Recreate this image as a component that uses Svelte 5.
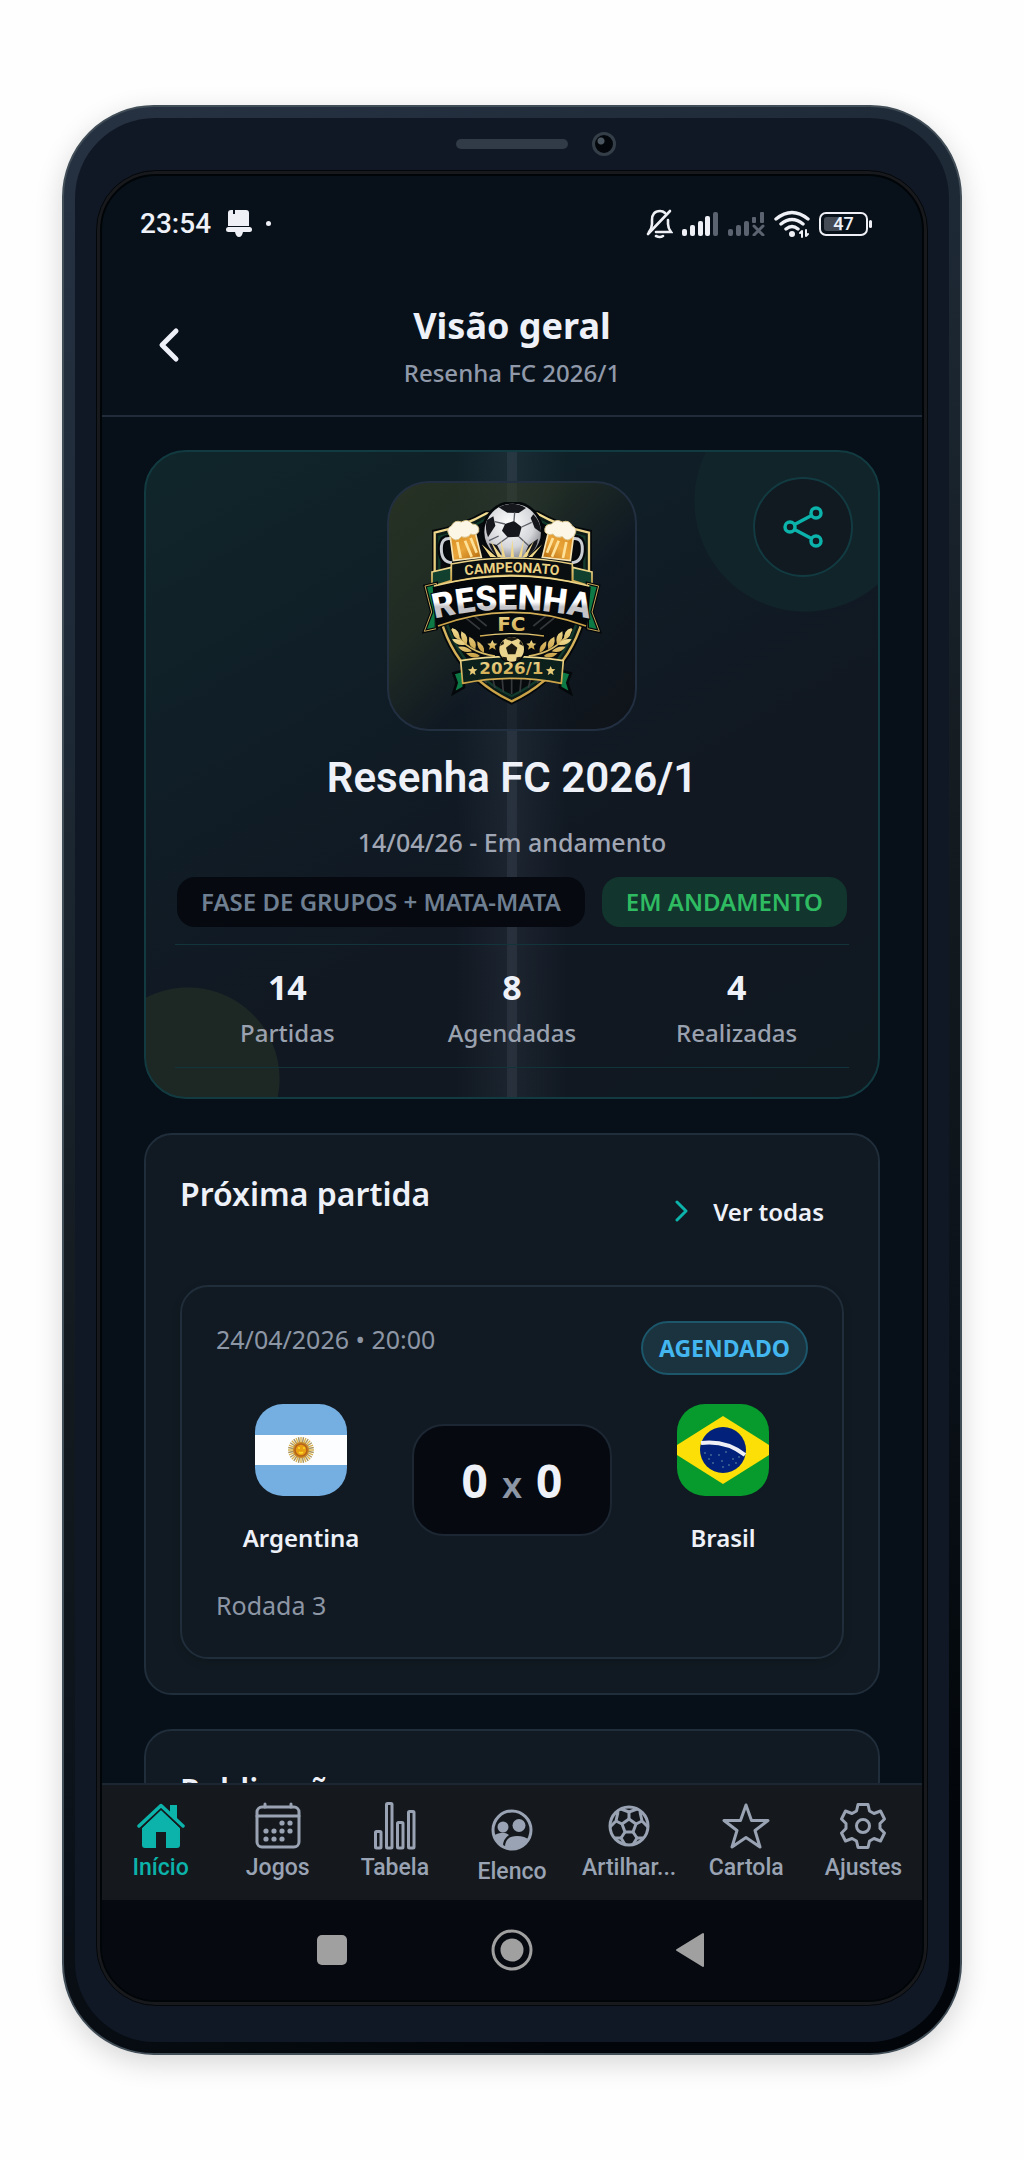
<script>
  let stats = [
    { value: 14, label: "Partidas" },
    { value: 8, label: "Agendadas" },
    { value: 4, label: "Realizadas" },
  ];

  let tabs = [
    { id: "home", label: "Início" },
    { id: "games", label: "Jogos" },
    { id: "table", label: "Tabela" },
    { id: "squad", label: "Elenco" },
    { id: "scorers", label: "Artilhar..." },
    { id: "star", label: "Cartola" },
    { id: "settings", label: "Ajustes" },
  ];

  let active = "home";

  const rays = Array.from({ length: 32 }, (_, i) => i * 11.25);
  const calendar_dots = [
    [29, 21], [37, 21],
    [13, 29], [21, 29], [29, 29], [37, 29],
    [13, 37], [21, 37], [29, 37],
  ];
  const sky = [
    [6, 52], [10, 58], [14, 62], [20, 54], [23, 60], [30, 64],
    [34, 58], [37, 62], [12, 54], [27, 51], [40, 56], [24, 66],
  ];
</script>

<div class="page">
  <div class="phone">
    <div class="body">
      <div class="sensors">
        <span class="speaker"></span>
        <span class="camera"></span>
      </div>

      <div class="bezel">
        <div class="screen">
          <div class="status">
            <span class="clock">23:54</span>
            <svg width="46" height="28" viewBox="0 0 46 28" fill="#eef0f5">
              <path d="M5 0h2v4h2V0h11q3 0 3 3v13H2V3q0-3 3-3z" />
              <rect y="17" width="26" height="5" rx="2.5" />
              <path d="M9 22h8q-1 5-4 5t-4-5z" />
              <circle cx="42.500" cy="13.500" r="2.500" />
            </svg>
            <span class="spacer"></span>
            <svg width="27" height="30" viewBox="0 0 27 30" fill="none" stroke="#eef0f5" stroke-width="2.600" stroke-linecap="round">
              <path d="M3 23q3-4 3-8v-4q0-9 8-9 3 0 5 2M22 11v4q0 4 3 8H10" />
              <path d="M24 2L2 25" />
              <path d="M10 27q4 2 7 0" />
            </svg>
            <svg width="37" height="24" viewBox="0 0 37 24" fill="#eef0f5">
              <rect y="17" width="5" height="7" rx="2" />
              <rect x="8" y="13" width="5" height="11" rx="2" />
              <rect x="16" y="9" width="5" height="15" rx="2" />
              <rect x="23" y="4" width="5" height="20" rx="2" />
              <rect x="31" width="5" height="24" rx="2" fill="#5c6370" />
            </svg>
            <svg width="37" height="24" viewBox="0 0 37 24" fill="#5c6370">
              <rect y="17" width="5" height="7" rx="2" />
              <rect x="8" y="13" width="5" height="11" rx="2" />
              <rect x="16" y="9" width="5" height="15" rx="2" />
              <rect x="24" y="5" width="4" height="6" rx="1" />
              <rect x="32" width="4" height="11" rx="1" />
              <path d="M26 14l9 9M35 14l-9 9" stroke="#5c6370" stroke-width="3" stroke-linecap="round" />
            </svg>
            <svg width="36" height="28" viewBox="0 0 36 28" fill="none" stroke="#eef0f5" stroke-width="3.400" stroke-linecap="round">
              <path d="M2 9q16-13 32 0M7 14q11-9 22 0M12 19q6-5 12 0" />
              <circle cx="18" cy="24" r="2" fill="#eef0f5" stroke-width="2" />
              <path d="M28 21v6M28 21l-2 2M32 20v6M32 26l2-2" stroke-width="2" />
            </svg>
            <span class="battery"><span>47</span></span>
          </div>

          <header>
            <button class="back" aria-label="Voltar">
              <svg width="22" height="36" viewBox="0 0 22 36" fill="none" stroke="#eef0f8" stroke-width="5" stroke-linecap="round" stroke-linejoin="round">
                <path d="M18 4L4 18l14 14" />
              </svg>
            </button>
            <div>
              <h1>Visão geral</h1>
              <p>Resenha FC 2026/1</p>
            </div>
          </header>

          <main>
            <section class="hero">
              <button class="share" aria-label="Compartilhar">
                <svg width="40" height="42" viewBox="0 0 40 42" fill="none" stroke="#0cb3aa" stroke-width="3.500">
                  <circle cx="33" cy="7" r="5" />
                  <circle cx="7" cy="21" r="5" />
                  <circle cx="33" cy="35" r="5" />
                  <path d="M28.500 9.500L11.500 18.500M28.500 32.500L11.500 23.500" />
                </svg>
              </button>

              <div class="crest">
                <svg width="182" height="208" viewBox="153 98 546 624">
                  <defs>
                    <linearGradient id="gold" x2="0" y2="1">
                      <stop offset="0" stop-color="#f1dc92" />
                      <stop offset="1" stop-color="#c9a044" />
                    </linearGradient>
                    <linearGradient id="steel" x2="0" y2="1">
                      <stop offset=".5" stop-color="#fff" />
                      <stop offset=".6" stop-color="#c4c4c8" />
                    </linearGradient>
                    <linearGradient id="beer" x2="1" y2="1">
                      <stop offset="0" stop-color="#d88a1c" />
                      <stop offset=".5" stop-color="#e9a53a" />
                      <stop offset="1" stop-color="#b06408" />
                    </linearGradient>
                    <radialGradient id="ball" cx=".45" cy=".35" r=".7">
                      <stop offset="0" stop-color="#fff" />
                      <stop offset=".6" stop-color="#d5d6da" />
                      <stop offset="1" stop-color="#77787e" />
                    </radialGradient>
                    <path id="arc-top" d="M278 319Q425 299 574 319" />
                    <path id="arc-mid" d="M196 448Q425 393 656 448" />
                  </defs>

                  <!-- shield -->
                  <path d="M186 182Q270 168 345 124H505Q580 168 666 182V330Q655 600 425 706Q195 600 186 330Z" fill="#05080a" />
                  <path d="M194 190Q280 172 350 132H500Q570 172 657 190V330Q645 592 425 696Q205 592 194 330Z" fill="#0b1a16" stroke="url(#gold)" stroke-width="7" />
                  <path d="M208 202Q285 186 350 148H500Q565 186 643 202V330Q630 582 425 680Q220 582 208 330Z" fill="#070b0d" stroke="#123a2c" stroke-width="7" />
                  <path d="M350 640l-20-16M375 656l-8-34M400 668l-4-46M425 674v-50M450 668l4-46M475 656l8-34M500 640l20-16M280 440l50 40M300 430l50 40M560 440l-50 40M540 430l-50 40" stroke="#36393c" stroke-width="5" />

                  <!-- ball -->
                  <circle cx="428" cy="188" r="93" fill="#05080a" />
                  <circle cx="428" cy="188" r="85" fill="url(#ball)" />
                  <g fill="#15171c">
                    <path d="M405 164l27-9 23 18-8 29-34 2-17-20z" />
                    <path d="M386 114q40-22 82 2l-22 15-34-1z" />
                    <path d="M350 153l20-12 6 28-22 35q-10-25-4-51z" />
                    <path d="M490 135q22 22 24 55l-20-14-12-30z" />
                    <path d="M357 222l24 5 14 28-12 8q-19-17-26-41z" />
                    <path d="M476 228l28-20q-3 30-27 50l-10-10z" />
                  </g>
                  <path d="M405 164l-31-7M432 155l2-26M455 173l30-14M447 202l29 27M413 204l-32 23M386 200l-29 14" stroke="#5d6068" stroke-width="4" />
                  <path d="M335 225l44 38h-18zM362 215l35 48h-14zM392 210l14 53h-9zM427 210l5 53h-10zM462 210l-7 53h-9zM492 215l-22 48h-12zM517 225l-30 38h-12z" fill="#f2d98a" />

                  <!-- mugs -->
                  {#each ["", "translate(851 0) scale(-1 1)"] as flip}
                    <g transform={flip}>
                      <path d="M242 208q-28-4-28 30 0 40 32 42" fill="none" stroke="#05080a" stroke-width="22" />
                      <path d="M242 208q-28-4-28 30 0 40 32 42" fill="none" stroke="#c9cdd4" stroke-width="9" />
                      <path d="M240 196l76-6 18 74-84 10z" fill="url(#beer)" stroke="#f5e3b3" stroke-width="5" />
                      <path d="M262 218l10 48M285 214l20 48M302 206l18 44" stroke="#ffe29a" stroke-width="8" />
                      <path d="M238 198q-12-20 6-28 10-20 30-12 20-12 32 6 24 0 20 24-10 12-24 6-8 14-28 8-16 22-36-4z" fill="#fbf6e6" stroke="#d9c48c" stroke-width="3" />
                    </g>
                  {/each}

                  <!-- ribbons -->
                  <path d="M186 308l58-14v40l-58 18zM666 308l-58-14v40l58 18z" fill="#12402f" stroke="url(#gold)" stroke-width="5" />
                  <path d="M165 350l34-8v136l-36 8 22-58zM686 350l-34-8v136l36 8-22-58z" fill="#0d7a45" stroke="#05080a" stroke-width="10" />
                  <path d="M165 350l34-8v136l-36 8 22-58zM686 350l-34-8v136l36 8-22-58z" fill="none" stroke="#c5a85a" stroke-width="3" />
                  <path d="M244 284Q425 248 607 284V338Q425 298 244 338Z" fill="#0a0f12" stroke="url(#gold)" stroke-width="5" />
                  <path d="M188 352Q425 292 662 352L652 480Q425 380 198 480Z" fill="#05080a" />
                  <path d="M192 350Q425 290 658 350M204 470Q425 388 648 470" fill="none" stroke="url(#gold)" stroke-width="5" />
                  <text class="crest-small"><textPath href="#arc-top" startOffset="50%" text-anchor="middle">CAMPEONATO</textPath></text>
                  <text class="crest-main"><textPath href="#arc-mid" startOffset="50%" text-anchor="middle">RESENHA</textPath></text>
                  <text class="crest-wide" x="424" y="485" font-size="60" text-anchor="middle">FC</text>
                  <path d="M330 500Q425 486 522 500" fill="none" stroke="url(#gold)" stroke-width="4" />

                  <!-- laurels -->
                  {#each ["", "translate(851 0) scale(-1 1)"] as flip}
                    <g transform={flip} fill="url(#gold)">
                      <path d="M245 480q50 72 130 80" fill="none" stroke="#d9bb66" stroke-width="5" />
                      <path d="M246 476q26 6 22 36-22-8-22-36zM274 486q24 12 16 40-22-14-16-40zM298 502q26 12 18 38-24-10-18-38zM322 516q24 12 20 34-22-8-20-34z" />
                      <path d="M246 510q26-4 40 16-26 6-40-16zM264 532q26-4 42 14-26 8-42-14zM288 552q26-6 42 8-22 12-42-8z" />
                      <path d="M367 512l5 10 10 1-8 7 3 11-10-6-10 6 3-11-8-7 10-1z" />
                    </g>
                  {/each}

                  <path d="M250 612l28-8 4 50-32 18 10-32zM602 612l-28-8-4 50 32 18-10-32z" fill="#0d7a45" stroke="#05080a" stroke-width="8" />
                  <path d="M272 574Q425 550 580 574L574 642Q425 612 278 642Z" fill="#0d211c" stroke="url(#gold)" stroke-width="5" />
                  <circle cx="425" cy="540" r="42" fill="#05080a" />
                  <circle cx="425" cy="540" r="37" fill="#ead48e" />
                  <path d="M425 522l17 13-6 20h-22l-6-20zM405 508l20 8 20-8q-20-10-40 0zM390 530l12-6-2-10q-10 8-10 16zM460 530l-12-6 2-10q10 8 10 16zM396 562l14 2 2 12q-12-4-16-14zM454 562l-14 2-2 12q12-4 16-14z" fill="#1d1a12" />
                  <text class="crest-wide" x="424" y="614" font-size="50" text-anchor="middle">2026/1</text>
                  <path d="M308 590l4 9 10 1-8 7 3 10-9-5-9 5 3-10-8-7 10-1zM542 590l4 9 10 1-8 7 3 10-9-5-9 5 3-10-8-7 10-1z" fill="#e7cb78" />
                </svg>
              </div>

              <h2 class="title">Resenha FC 2026/1</h2>
              <p class="when">14/04/26 - Em andamento</p>

              <div class="pills">
                <span class="pill">FASE DE GRUPOS + MATA-MATA</span>
                <span class="pill live">EM ANDAMENTO</span>
              </div>

              <div class="stats">
                {#each stats as stat}
                  <div>
                    <strong>{stat.value}</strong>
                    <span>{stat.label}</span>
                  </div>
                {/each}
              </div>
            </section>

            <section class="card">
              <div class="card-head">
                <h2>Próxima partida</h2>
                <button class="more">
                  <svg width="14" height="22" viewBox="0 0 14 22" fill="none" stroke="#0cb3aa" stroke-width="3" stroke-linecap="round" stroke-linejoin="round">
                    <path d="M2 2l9 9-9 9" />
                  </svg>
                  Ver todas
                </button>
              </div>

              <article class="match">
                <div class="match-head">
                  <p>24/04/2026 • 20:00</p>
                  <span class="badge">AGENDADO</span>
                </div>

                <div class="teams">
                  <div class="team">
                    <svg class="flag" viewBox="0 0 92 92">
                      <rect width="92" height="92" fill="#75aee0" />
                      <rect y="31" width="92" height="30" fill="#fcfdff" />
                      {#each rays as angle}
                        <path d="M46 33v9" stroke={angle % 22.5 ? "#a8935c" : "#d9b24c"} stroke-width="1.400" transform="rotate({angle} 46 46)" />
                      {/each}
                      <circle cx="46" cy="46" r="8" fill="#c98a2a" />
                      <circle cx="46" cy="46" r="6" fill="#e8a012" stroke="#b5621b" stroke-width="1.500" />
                      <path d="M43 44h2M48 44h2M44 48q2 2 4 0" stroke="#fddc2a" stroke-width="1.500" fill="none" />
                    </svg>
                    <span>Argentina</span>
                  </div>

                  <div class="score">
                    <b>0</b>
                    <span>x</span>
                    <b>0</b>
                  </div>

                  <div class="team">
                    <svg class="flag" viewBox="0 0 92 92">
                      <rect width="92" height="92" fill="#069b2c" />
                      <path d="M-8 46L46 12l54 34-54 34z" fill="#fddf08" />
                      <circle cx="46" cy="46" r="23" fill="#02217a" />
                      <path d="M24 39q25-3 44 12" fill="none" stroke="#eef0f5" stroke-width="4" />
                      {#each sky as [x, y]}
                        <circle cx={x + 22} cy={y - 3} r=".7" fill="#7fb3b5" />
                      {/each}
                    </svg>
                    <span>Brasil</span>
                  </div>
                </div>

                <p>Rodada 3</p>
              </article>
            </section>

            <section class="card">
              <div class="card-head">
                <h2>Publicações</h2>
              </div>
            </section>
          </main>

          <nav>
            {#each tabs as tab}
              <button class:active={tab.id === active} on:click={() => (active = tab.id)}>
                {#if tab.id === "home"}
                  <svg width="48" height="48" viewBox="0 0 48 48" fill="currentColor">
                    <path d="M24 8L5 26v17q0 3 3 3h11V30h10v16h11q3 0 3-3V26z" />
                    <path d="M2 24L24 3l22 21" fill="none" stroke="#15191d" stroke-width="7" />
                    <path d="M33 11V3h7v14z" />
                    <path d="M2 24L24 3.500 46 24" fill="none" stroke="currentColor" stroke-width="3.500" stroke-linecap="round" stroke-linejoin="round" />
                  </svg>
                {:else if tab.id === "games"}
                  <svg width="48" height="48" viewBox="0 0 48 48" fill="none" stroke="currentColor" stroke-width="3" stroke-linecap="round">
                    <rect x="3" y="5" width="42" height="40" rx="5" />
                    <path d="M3 14h42M11 2v3M37 2v3" />
                    {#each calendar_dots as [x, y]}
                      <circle cx={x - 1} cy={y} r="2.600" fill="currentColor" stroke="none" />
                    {/each}
                  </svg>
                {:else if tab.id === "table"}
                  <svg width="48" height="48" viewBox="0 0 48 48" fill="none" stroke="currentColor" stroke-width="3">
                    <rect x="4.500" y="29.500" width="5.500" height="16.500" rx="1" />
                    <rect x="15.500" y="1.500" width="5.500" height="44.500" rx="1" />
                    <rect x="26.500" y="20.500" width="5.500" height="25.500" rx="1" />
                    <rect x="37.500" y="9.500" width="5.500" height="36.500" rx="1" />
                  </svg>
                {:else if tab.id === "squad"}
                  <svg width="48" height="52" viewBox="0 0 48 52" fill="currentColor">
                    <circle cx="24" cy="28" r="19" fill="none" stroke="currentColor" stroke-width="3" />
                    <circle cx="15" cy="25" r="5.500" />
                    <circle cx="31" cy="23.500" r="6.500" />
                    <path d="M5 34q10-6 16-1-6 4-6 11-8-3-10-10z" />
                    <path d="M17 45q0-11 12-11 8 0 12 4-6 12-24 7z" />
                  </svg>
                {:else if tab.id === "scorers"}
                  <svg width="48" height="48" viewBox="0 0 48 48" fill="none" stroke="currentColor" stroke-width="3" stroke-linejoin="round">
                    <circle cx="24" cy="24" r="19" />
                    <path d="M24 17l7 5-3 8h-8l-3-8z" />
                    <path d="M24 17v-7M31 22l6-3M28 30l4 6M20 30l-4 6M17 22l-6-3" />
                    <path d="M16 7l8 3 8-3M37 19l-2-9M37 19l6 6M32 36h7M32 36l-4 6.500M16 36l4 6.500M16 36H9M11 19l-6 6M11 19l2-9" />
                  </svg>
                {:else if tab.id === "star"}
                  <svg width="48" height="48" viewBox="0 0 48 48" fill="none" stroke="currentColor" stroke-width="3" stroke-linejoin="round">
                    <path d="M24 3l5.500 15.500H46L33 28.500 38 45 24 35.500 10 45l5-16.500L2 18.500h16.500z" />
                  </svg>
                {:else}
                  <svg width="48" height="48" viewBox="0 0 48 48" fill="none" stroke="currentColor" stroke-width="3" stroke-linejoin="round">
                    <circle cx="24" cy="24" r="6.500" />
                    <path d="M19 2.500h10l1.500 6.500 4.500 2.500 6.500-2.500 4 8-4.500 4.500v5l4.500 4.500-4 8-6.500-2.500-4.500 2.500-1.500 6.500H19l-1.500-6.500-4.500-2.500-6.500 2.500-4-8L7 26.500v-5L2.500 17l4-8 6.500 2.500L17.500 9z" />
                  </svg>
                {/if}
                <span>{tab.label}</span>
              </button>
            {/each}
          </nav>

          <div class="system">
            <button aria-label="Recentes">
              <svg width="42" height="42" viewBox="0 0 42 42" fill="#a0a0a0"><rect x="6" y="6" width="30" height="30" rx="5" /></svg>
            </button>
            <button aria-label="Tela inicial">
              <svg width="42" height="42" viewBox="0 0 42 42" fill="#a0a0a0">
                <circle cx="21" cy="21" r="19" fill="none" stroke="#a0a0a0" stroke-width="3" />
                <circle cx="21" cy="21" r="11.500" />
              </svg>
            </button>
            <button aria-label="Voltar ao app anterior">
              <svg width="42" height="42" viewBox="0 0 42 42" fill="#a0a0a0" stroke="#a0a0a0" stroke-width="2" stroke-linejoin="round"><path d="M32 5v32L6 21z" /></svg>
            </button>
          </div>
        </div>
      </div>
    </div>
  </div>
</div>

<style>
  :global(body) {
    margin: 0;
    background: #fefefe;
  }

  .page {
    box-sizing: border-box;
    display: flex;
    height: 100vh;
    padding: 105px 62px;
    font-family: "Noto Sans", sans-serif;
    color: #eef1f8;
  }

  h1, h2, p {
    margin: 0;
  }

  svg {
    display: block;
    flex: none;
  }

  button {
    padding: 0;
    border: 0;
    background: none;
    color: inherit;
    font: inherit;
    cursor: pointer;
  }

  .phone {
    box-sizing: border-box;
    display: flex;
    flex: 1;
    min-width: 0;
    padding: 11px;
    border: 2px solid #414d57;
    border-radius: 92px;
    background: linear-gradient(150deg, #263242 0%, #1d2935 25%, #141b20 50%, #0b1219 70%, #02060a 90%);
    box-shadow: 0 8px 28px rgba(0, 0, 0, 0.16);
  }

  .body {
    display: flex;
    flex: 1;
    flex-direction: column;
    min-width: 0;
    padding: 0 21px 36px;
    border-radius: 80px;
    background: #111825;
  }

  .sensors {
    display: grid;
    grid-template-columns: 1fr auto 1fr;
    align-items: center;
    column-gap: 24px;
    height: 52px;
  }

  .speaker {
    grid-column: 2;
    width: 112px;
    height: 10px;
    border-radius: 5px;
    background: #303b47;
  }

  .camera {
    box-sizing: border-box;
    width: 24px;
    height: 24px;
    border: 3px solid #343e48;
    border-radius: 50%;
    background: radial-gradient(circle at 6px 6px, #4a5560 3px, #03070b 4px);
  }

  .bezel {
    display: flex;
    flex: 1;
    min-height: 0;
    padding: 3px;
    border: 1px solid #04070a;
    border-radius: 60px;
    background: #17191c;
  }

  .screen {
    display: flex;
    flex: 1;
    flex-direction: column;
    min-width: 0;
    overflow: hidden;
    border: 2px solid #020508;
    border-radius: 56px;
    background: #08111a;
  }

  .status {
    display: flex;
    align-items: center;
    gap: 9px;
    height: 95px;
    padding: 0 54px 0 38px;
    font-family: Roboto, sans-serif;
  }

  .clock {
    margin-right: 6px;
    font-size: 28px;
    font-weight: 500;
  }

  .spacer {
    flex: 1;
  }

  .battery {
    position: relative;
    box-sizing: border-box;
    width: 49px;
    height: 24px;
    padding: 3px;
    border: 2px solid #eef0f5;
    border-radius: 7px;
    font-size: 18px;
    font-weight: 500;
    line-height: 14px;
    text-align: center;
  }

  .battery span {
    display: block;
    border-radius: 3px;
    background: linear-gradient(90deg, #454b54 47%, transparent 47%);
  }

  .battery::after {
    position: absolute;
    top: 6px;
    right: -6px;
    width: 3px;
    height: 8px;
    border-radius: 2px;
    background: #eef0f5;
    content: "";
  }

  header {
    display: grid;
    grid-template-columns: 100px 1fr 100px;
    align-items: center;
    padding: 30px 0 26px;
    border-bottom: 2px solid #202c39;
    text-align: center;
  }

  .back {
    display: flex;
    justify-content: center;
    padding-left: 34px;
  }

  h1 {
    font-size: 36px;
    font-weight: 700;
    line-height: 50px;
  }

  header p {
    margin-top: 6px;
    color: #9099a9;
    font-size: 24px;
    font-weight: 500;
    line-height: 32px;
  }

  main {
    display: flex;
    flex: 1;
    flex-direction: column;
    gap: 34px;
    min-height: 0;
    padding: 33px 42px 0;
    overflow: hidden;
    background: #070f18;
  }

  .hero {
    position: relative;
    display: flex;
    flex: none;
    flex-direction: column;
    align-items: center;
    padding: 29px;
    overflow: hidden;
    border: 2px solid #123b41;
    border-radius: 42px;
    background:
      linear-gradient(90deg, transparent calc(50% - 5px), rgba(120, 130, 150, 0.13) calc(50% - 5px), rgba(120, 130, 150, 0.13) calc(50% + 5px), transparent calc(50% + 5px)),
      linear-gradient(90deg, transparent calc(50% - 56px), rgba(130, 145, 170, 0.1) 50%, transparent calc(50% + 56px)),
      radial-gradient(circle 92px at 42px calc(100% - 18px), #1d2724 91px, transparent 92px),
      radial-gradient(circle 111px at calc(100% - 73px) 49px, #11242a 110px, transparent 111px),
      linear-gradient(150deg, #10262a 0%, #101d26 35%, #111822 60%, #101820 100%);
  }

  .share {
    position: absolute;
    top: 25px;
    right: 25px;
    box-sizing: border-box;
    display: flex;
    align-items: center;
    justify-content: center;
    width: 100px;
    height: 100px;
    border: 2px solid #123b41;
    border-radius: 50%;
    background: #111921;
  }

  .crest {
    box-sizing: border-box;
    display: flex;
    align-items: center;
    justify-content: center;
    width: 250px;
    height: 250px;
    border: 2px solid #222f41;
    border-radius: 42px;
    background: linear-gradient(135deg, rgba(62, 66, 32, 0.5) 0%, rgba(50, 58, 32, 0.45) 35%, rgba(14, 20, 30, 0.4) 60%, rgba(14, 16, 18, 0.6) 100%);
  }

  .crest-small {
    fill: #ecd283;
    font: 700 42px Roboto, sans-serif;
  }

  .crest-main {
    fill: url(#steel);
    stroke: #05080a;
    stroke-width: 6px;
    paint-order: stroke;
    font: 900 104px Roboto, sans-serif;
  }

  .crest-wide {
    fill: url(#gold);
    font-family: "DejaVu Sans", sans-serif;
    font-weight: 700;
  }

  .title {
    margin-top: 22px;
    font-family: Roboto, sans-serif;
    font-size: 42px;
    font-weight: 600;
    line-height: 50px;
  }

  .when {
    margin-top: 22px;
    color: #a0a6b3;
    font-size: 25px;
    font-weight: 500;
    line-height: 34px;
  }

  .pills {
    display: flex;
    gap: 17px;
    margin: 18px 0 17px;
  }

  .pill {
    padding: 0 24px;
    border-radius: 18px;
    background: #060a10;
    color: #6f7f92;
    font-size: 24px;
    font-weight: 600;
    line-height: 50px;
    white-space: nowrap;
  }

  .live {
    background: #12352d;
    color: #2fbb62;
  }

  .stats {
    display: grid;
    grid-template-columns: repeat(3, 1fr);
    align-self: stretch;
    padding: 20px 0 18px;
    border-top: 1px solid #12343b;
    border-bottom: 1px solid #12343b;
    text-align: center;
  }

  .stats strong,
  .stats span {
    display: block;
  }

  .stats strong {
    margin-bottom: 7px;
    font-size: 34px;
    font-weight: 700;
    line-height: 45px;
  }

  .stats span {
    color: #9aa1af;
    font-size: 24px;
    font-weight: 500;
    line-height: 32px;
  }

  .card {
    flex: none;
    padding: 34px;
    border: 2px solid #202d3a;
    border-radius: 28px;
    background: #111a22;
  }

  .card-head {
    display: flex;
    align-items: flex-start;
    justify-content: space-between;
    margin-bottom: 32px;
  }

  .card-head h2 {
    font-size: 32px;
    font-weight: 600;
    line-height: 50px;
  }

  .more {
    display: flex;
    align-items: center;
    gap: 24px;
    height: 84px;
    padding: 0 20px;
    font-size: 24px;
    font-weight: 600;
  }

  .match {
    padding: 34px;
    border: 2px solid #202d3a;
    border-radius: 28px;
    background: #111a22;
    box-shadow: 0 3px 8px rgba(0, 0, 0, 0.15);
  }

  .match-head {
    display: flex;
    align-items: flex-start;
    justify-content: space-between;
    margin-bottom: 29px;
  }

  .match p {
    color: #8d96a5;
    font-size: 25px;
    line-height: 36px;
  }

  .badge {
    padding: 0 16px;
    border: 2px solid #1c566b;
    border-radius: 28px;
    background: #1a333e;
    color: #43b6ef;
    font-size: 23px;
    font-weight: 700;
    line-height: 50px;
  }

  .teams {
    display: grid;
    grid-template-columns: 1fr 200px 1fr;
    gap: 26px;
    align-items: center;
    margin-bottom: 32px;
  }

  .team {
    display: flex;
    flex-direction: column;
    align-items: center;
    gap: 25px;
    font-size: 24px;
    font-weight: 600;
    line-height: 34px;
  }

  .flag {
    width: 92px;
    height: 92px;
    border-radius: 28px;
  }

  .score {
    box-sizing: border-box;
    display: flex;
    align-items: baseline;
    justify-content: center;
    gap: 14px;
    height: 112px;
    border: 2px solid #1c2733;
    border-radius: 32px;
    background: #060a10;
    font-size: 46px;
    line-height: 108px;
  }

  .score span {
    color: #8d96a5;
    font-size: 36px;
    font-weight: 600;
  }

  nav {
    display: grid;
    grid-template-columns: repeat(7, 1fr);
    align-items: start;
    padding: 17px 0 12px;
    border-top: 2px solid #1b2632;
    background: #15191d;
    color: #99a3b3;
    font-family: Roboto, sans-serif;
    font-size: 23px;
    font-weight: 500;
    line-height: 32px;
  }

  nav button {
    display: flex;
    flex-direction: column;
    align-items: center;
    gap: 2px;
  }

  nav .active {
    color: #0cb3aa;
  }

  .system {
    display: grid;
    grid-template-columns: repeat(3, 22%);
    align-items: center;
    justify-content: center;
    justify-items: center;
    height: 100px;
    background: #060a10;
  }
</style>
